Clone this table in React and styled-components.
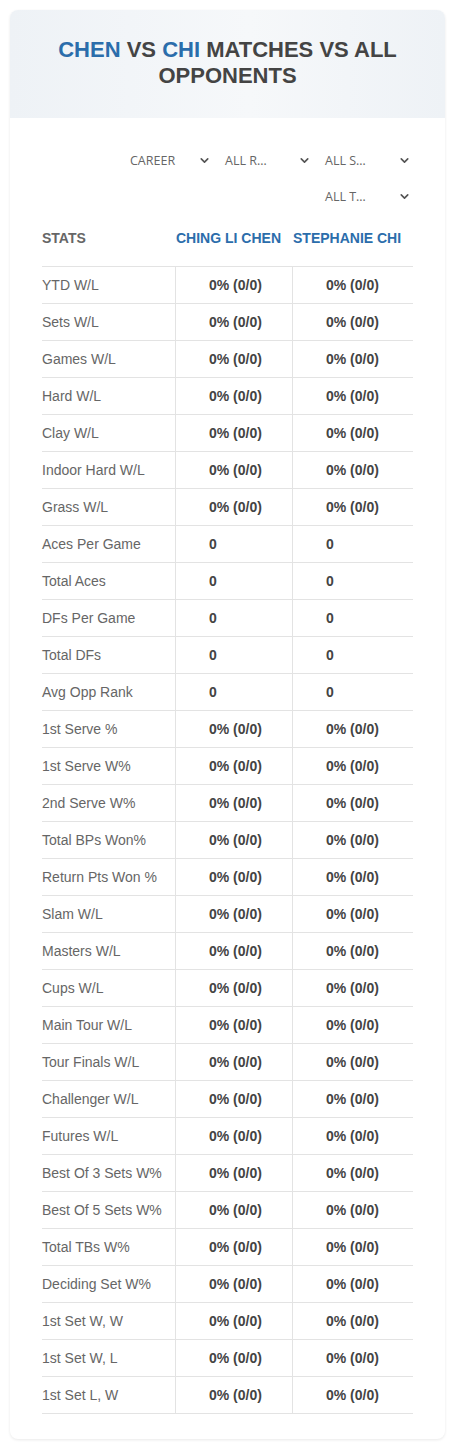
import styled, { createGlobalStyle } from "styled-components";
import { ChevronDown } from "lucide-react";

const GlobalStyle = createGlobalStyle`
  body {
    margin: 0;
    background: #fff;
    font-family: "Liberation Sans", Arial, sans-serif;
  }
`;

const filters = [
  { label: "CAREER", first: true },
  { label: "ALL R…" },
  { label: "ALL S…" },
  { label: "ALL T…" },
];

const pct = "0% (0/0)";
const rows = [
  ["YTD W/L", pct],
  ["Sets W/L", pct],
  ["Games W/L", pct],
  ["Hard W/L", pct],
  ["Clay W/L", pct],
  ["Indoor Hard W/L", pct],
  ["Grass W/L", pct],
  ["Aces Per Game", "0"],
  ["Total Aces", "0"],
  ["DFs Per Game", "0"],
  ["Total DFs", "0"],
  ["Avg Opp Rank", "0"],
  ["1st Serve %", pct],
  ["1st Serve W%", pct],
  ["2nd Serve W%", pct],
  ["Total BPs Won%", pct],
  ["Return Pts Won %", pct],
  ["Slam W/L", pct],
  ["Masters W/L", pct],
  ["Cups W/L", pct],
  ["Main Tour W/L", pct],
  ["Tour Finals W/L", pct],
  ["Challenger W/L", pct],
  ["Futures W/L", pct],
  ["Best Of 3 Sets W%", pct],
  ["Best Of 5 Sets W%", pct],
  ["Total TBs W%", pct],
  ["Deciding Set W%", pct],
  ["1st Set W, W", pct],
  ["1st Set W, L", pct],
  ["1st Set L, W", pct],
];

export default function App() {
  return (
    <Page>
      <GlobalStyle />
      <Card>
        <Header>
          <Title>
            <Name>CHEN</Name> VS <Name>CHI</Name> MATCHES VS ALL OPPONENTS
          </Title>
        </Header>
        <Body>
          <Filters>
            {filters.map((f) => (
              <Select key={f.label} $first={f.first}>
                <span>{f.label}</span>
                <ChevronDown size={13} strokeWidth={3} color="#555" />
              </Select>
            ))}
          </Filters>
          <Table>
            <HeadRow>
              <HeadCell>STATS</HeadCell>
              <HeadCell $player>CHING LI CHEN</HeadCell>
              <HeadCell $player>STEPHANIE CHI</HeadCell>
            </HeadRow>
            {rows.map(([name, value]) => (
              <Row key={name}>
                <StatName>{name}</StatName>
                <Value>{value}</Value>
                <Value>{value}</Value>
              </Row>
            ))}
          </Table>
        </Body>
      </Card>
    </Page>
  );
}

const Page = styled.div`
  padding: 10px;
`;

const Card = styled.section`
  background: #fff;
  border-radius: 8px;
  box-shadow: 0 1px 3px rgba(0, 0, 0, 0.09);
  overflow: hidden;
`;

const Header = styled.header`
  background: linear-gradient(90deg, #eef2f6 0%, #f6f8fa 55%, #eef2f6 100%);
  padding: 27px 30px 29px;
  text-align: center;
`;

const Title = styled.h1`
  margin: 0;
  font-size: 22px;
  line-height: 26px;
  font-weight: 700;
  color: #444;
`;

const Name = styled.span`
  color: #2b6dab;
`;

const Body = styled.div`
  padding: 28px 32px 25px;
`;

const Filters = styled.div`
  display: flex;
  flex-wrap: wrap;
  justify-content: flex-end;
  column-gap: 8px;
  row-gap: 8px;
  padding-left: 60px;
`;

const Select = styled.div`
  width: 92px;
  height: 28px;
  box-sizing: border-box;
  display: flex;
  align-items: center;
  justify-content: space-between;
  padding: 0 2px 0 ${(p) => (p.$first ? "9px" : "4px")};
  font-family: "Open Sans", sans-serif;
  font-size: 12.5px;
  color: #666;
`;

const Table = styled.div`
  margin-top: 10px;
  display: grid;
  grid-template-columns: 133px 117px 1fr;
`;

const HeadRow = styled.div`
  display: contents;
`;

const HeadCell = styled.div`
  padding: 10px 0 20px ${(p) => (p.$player ? "1px" : "0")};
  border-bottom: 1px solid #e3e3e3;
  font-size: 14px;
  line-height: 16px;
  font-weight: 700;
  color: ${(p) => (p.$player ? "#2b6dab" : "#666")};
  white-space: nowrap;
`;

const Row = styled.div`
  display: contents;
`;

const StatName = styled.div`
  height: 36px;
  display: flex;
  align-items: center;
  border-bottom: 1px solid #e3e3e3;
  font-size: 14px;
  color: #666;
`;

const Value = styled.div`
  height: 36px;
  display: flex;
  align-items: center;
  padding-left: 33px;
  border-bottom: 1px solid #e3e3e3;
  border-left: 1px solid #e3e3e3;
  font-size: 14px;
  font-weight: 700;
  color: #444;
`;
